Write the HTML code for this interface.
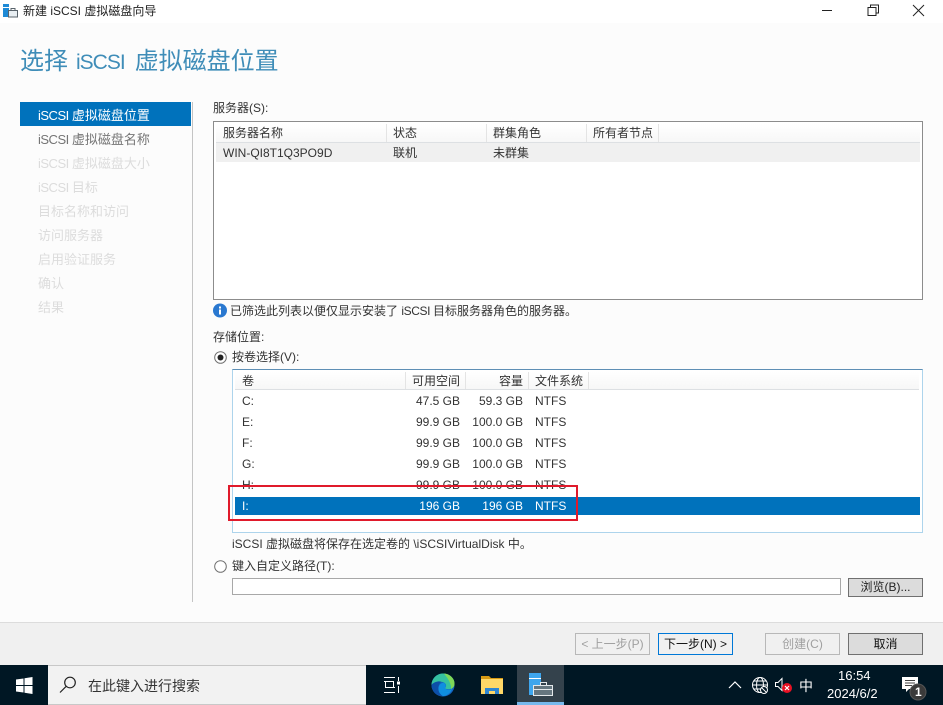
<!DOCTYPE html>
<html lang="zh-CN"><head><meta charset="utf-8"><title>新建 iSCSI 虚拟磁盘向导</title>
<style>
html,body{margin:0;padding:0;width:943px;height:705px;overflow:hidden;background:#fcfcfc}
body{position:relative;font:12px/16px "Liberation Sans","Noto Sans CJK SC",sans-serif;color:#333}
div,span.t,svg{position:absolute}
.t{position:absolute;white-space:nowrap;line-height:16px}
.r{text-align:right;width:70px}
.nav{left:38px;color:#dcdcdc;font-size:13px}
.l{letter-spacing:-.5px}
.w{color:#fff}
.btn{position:absolute;box-sizing:border-box;text-align:center;font-size:12px;line-height:20px;height:22px;width:75px;background:#dcdcdc;border:1px solid #707070;color:#222}
.dis{background:#f0f0f0;border-color:#b8b8b8;color:#a0a0a0}
.hd{background:linear-gradient(#fff,#f7f7f7);border-bottom:1px solid #dde0e3}
.v{width:1px;background:#e4e4e4}
</style></head><body>
<div style="left:0;top:0;width:943px;height:23px;background:#fff"></div>
<svg style="left:3px;top:4px" width="15" height="14" viewBox="0 0 15 14"><rect x="0" y="0" width="6" height="13" fill="#1e8ad6"/><rect x="0" y="3" width="6" height="1" fill="#fff"/><rect x="5.500" y="6.500" width="9" height="6.500" fill="#e8eef2" stroke="#59636b"/><rect x="8" y="4.500" width="4" height="2" fill="none" stroke="#59636b"/></svg>
<span class="t" style="left:23px;top:3px;color:#222">新建 iSCSI 虚拟磁盘向导</span>
<svg style="left:820px;top:4px" width="110" height="14" viewBox="0 0 110 14" fill="none" stroke="#222"><path d="M2 6.500h10"/><path d="M48 3.500h8v8h-8zM50.500 3.500v-2.500h8v8h-2.500"/><path d="M93 1l11 11M104 1l-11 11"/></svg>

<span class="t" style="left:20px;top:46px;font-size:24px;line-height:32px;color:#3f8db8">选择<span style="font-size:21px;letter-spacing:-1px;margin:0 10px 0 8px">iSCSI</span>虚拟磁盘位置</span>

<div style="left:20px;top:102px;width:171px;height:24px;background:#0072bc"></div>
<div style="left:192px;top:102px;width:1px;height:500px;background:#c4c4c4"></div>
<span class="t nav w" style="top:108px;color:#fff"><span class="l">iSCSI </span>虚拟磁盘位置</span>
<span class="t nav" style="top:132px;color:#757575"><span class="l">iSCSI </span>虚拟磁盘名称</span>
<span class="t nav" style="top:156px"><span class="l">iSCSI </span>虚拟磁盘大小</span>
<span class="t nav" style="top:180px"><span class="l">iSCSI </span>目标</span>
<span class="t nav" style="top:204px">目标名称和访问</span>
<span class="t nav" style="top:228px">访问服务器</span>
<span class="t nav" style="top:252px">启用验证服务</span>
<span class="t nav" style="top:276px">确认</span>
<span class="t nav" style="top:300px">结果</span>

<span class="t" style="left:213px;top:100px">服务器(S):</span>
<div style="left:213px;top:121px;width:708px;height:177px;border:1px solid #8c8c8c;background:#fff"></div>
<div class="hd" style="left:216px;top:124px;width:704px;height:18px"></div>
<div class="v" style="left:386px;top:124px;height:18px"></div>
<div class="v" style="left:486px;top:124px;height:18px"></div>
<div class="v" style="left:586px;top:124px;height:18px"></div>
<div class="v" style="left:658px;top:124px;height:18px"></div>
<div style="left:216px;top:143px;width:704px;height:19px;background:#f0f0f0"></div>
<span class="t" style="left:223px;top:125px">服务器名称</span><span class="t" style="left:393px;top:125px">状态</span><span class="t" style="left:493px;top:125px">群集角色</span><span class="t" style="left:593px;top:125px">所有者节点</span>
<span class="t" style="left:223px;top:145px">WIN-QI8T1Q3PO9D</span><span class="t" style="left:393px;top:145px">联机</span><span class="t" style="left:493px;top:145px">未群集</span>

<svg style="left:213px;top:303px" width="15" height="15" viewBox="0 0 15 15"><circle cx="7" cy="7.500" r="7" fill="#2a78d0"/><rect x="6" y="6.500" width="2" height="5" fill="#fff"/><rect x="6" y="3.500" width="2" height="2" fill="#fff"/></svg>
<span class="t" style="left:230px;top:303px">已筛选此列表以便仅显示安装了 <span style="letter-spacing:-.4px">iSCSI </span>目标服务器角色的服务器。</span>
<span class="t" style="left:213px;top:329px">存储位置:</span>

<svg style="left:214px;top:351px" width="13" height="13"><circle cx="6.500" cy="6.500" r="5.800" fill="#fff" stroke="#707070"/><circle cx="6.500" cy="6.500" r="3" fill="#222"/></svg>
<span class="t" style="left:232px;top:349px">按卷选择(V):</span>

<div style="left:232px;top:369px;width:689px;height:162px;border:1px solid #add4ec;border-top-color:#5e8fb5;background:#fff"></div>
<div class="hd" style="left:235px;top:372px;width:684px;height:17px"></div>
<div class="v" style="left:405px;top:372px;height:17px"></div>
<div class="v" style="left:465px;top:372px;height:17px"></div>
<div class="v" style="left:528px;top:372px;height:17px"></div>
<div class="v" style="left:588px;top:372px;height:17px"></div>
<span class="t" style="left:242px;top:373px">卷</span><span class="t" style="left:412px;top:373px">可用空间</span><span class="t" style="left:499px;top:373px">容量</span><span class="t" style="left:535px;top:373px">文件系统</span>

<span class="t" style="left:242px;top:393px">C:</span><span class="t r" style="left:390px;top:393px">47.5 GB</span><span class="t r" style="left:453px;top:393px">59.3 GB</span><span class="t" style="left:535px;top:393px">NTFS</span>
<span class="t" style="left:242px;top:414px">E:</span><span class="t r" style="left:390px;top:414px">99.9 GB</span><span class="t r" style="left:453px;top:414px">100.0 GB</span><span class="t" style="left:535px;top:414px">NTFS</span>
<span class="t" style="left:242px;top:435px">F:</span><span class="t r" style="left:390px;top:435px">99.9 GB</span><span class="t r" style="left:453px;top:435px">100.0 GB</span><span class="t" style="left:535px;top:435px">NTFS</span>
<span class="t" style="left:242px;top:456px">G:</span><span class="t r" style="left:390px;top:456px">99.9 GB</span><span class="t r" style="left:453px;top:456px">100.0 GB</span><span class="t" style="left:535px;top:456px">NTFS</span>
<span class="t" style="left:242px;top:477px">H:</span><span class="t r" style="left:390px;top:477px">99.9 GB</span><span class="t r" style="left:453px;top:477px">100.0 GB</span><span class="t" style="left:535px;top:477px">NTFS</span>
<div style="left:235px;top:497px;width:685px;height:18px;background:#0072bc"></div>
<span class="t w" style="left:242px;top:498px">I:</span><span class="t r w" style="left:390px;top:498px">196 GB</span><span class="t r w" style="left:453px;top:498px">196 GB</span><span class="t w" style="left:535px;top:498px">NTFS</span>
<div style="left:228px;top:485px;width:346px;height:32px;border:2px solid #e01a2b"></div>

<span class="t" style="left:232px;top:536px">iSCSI 虚拟磁盘将保存在选定卷的 \iSCSIVirtualDisk 中。</span>
<svg style="left:214px;top:560px" width="13" height="13"><circle cx="6.500" cy="6.500" r="5.800" fill="#fff" stroke="#707070"/></svg>
<span class="t" style="left:232px;top:558px">键入自定义路径(T):</span>
<div style="left:232px;top:578px;width:607px;height:15px;border:1px solid #a8a8a8;background:#fff"></div>
<span class="btn" style="left:848px;top:578px;height:19px;line-height:17px">浏览(B)...</span>

<div style="left:0;top:622px;width:943px;height:43px;background:#f0f0f0;border-top:1px solid #dcdcdc;box-sizing:border-box"></div>
<span class="btn dis" style="left:575px;top:633px">&lt; 上一步(P)</span>
<span class="btn" style="left:658px;top:633px;background:#f0f0f0;border-color:#0078d7;color:#111">下一步(N) &gt;</span>
<span class="btn dis" style="left:765px;top:633px">创建(C)</span>
<span class="btn" style="left:848px;top:633px;color:#111">取消</span>

<div style="left:0;top:665px;width:943px;height:40px;background:#001724"></div>
<svg style="left:16px;top:677px" width="17" height="17" viewBox="0 0 17 17" fill="#fff"><path d="M0 2.500l7.500-1v6.500H0zM8.500 1.300l8-1.300v8h-8zM0 9h7.500v6.500l-7.500-1zM8.500 9h8v8l-8-1.300z"/></svg>
<div style="left:48px;top:665px;width:318px;height:40px;background:#f2f2f2;border-top:1px solid #c8c8c8;border-bottom:1px solid #c8c8c8;box-sizing:border-box"></div>
<svg style="left:59px;top:676px" width="18" height="18" viewBox="0 0 18 18" fill="none" stroke="#222" stroke-width="1.200"><circle cx="11" cy="6.500" r="5.300"/><path d="M7.200 10.300L1 16.500"/></svg>
<span class="t" style="left:88px;top:678px;font-size:14px;color:#333">在此键入进行搜索</span>

<svg style="left:384px;top:676px" width="17" height="18" viewBox="0 0 17 18" fill="none" stroke="#fff"><path d="M0 1.500h11M0 16.500h11M1.500 5.500h8v6h-8zM0 5.500h3M8 11.500h3M14.500 1v4M14.500 10v7"/><rect x="13" y="5.500" width="3" height="3" fill="#fff" stroke="none"/></svg>
<svg style="left:431px;top:673px" width="24" height="24" viewBox="0 0 26 26"><circle cx="13" cy="13" r="12.500" fill="#1565c0"/><path d="M.5 13C1 5 7 .5 13 .5c7 0 12.500 5 12.500 11 0 4-3.500 6-6.500 6-2.500 0-4-1-4-1 2-1.500 2-5-1.500-6.500C9 8.500 3 9.500.5 13z" fill="#35c1a0"/><path d="M14 .6c6 .3 11.500 5 11.500 11 0 3-2 5-4 5.700 1-3-1-9-7.500-16.700z" fill="#7fd858"/><path d="M8 17c0-4 3-6.500 6-6.500 2.500 1.500 2.500 4.500 1 6 2 2 6 2 8 .5-2 5-6 8-11 8-2 0-4-3-4-8z" fill="#0f8fe0"/><path d="M8 17c0 3 2 6.500 5 8C6 25 1 20 .5 13 3 9.500 9 8.500 11 9.500 9 11 8 14 8 17z" fill="#0d4fa8"/></svg>
<svg style="left:481px;top:676px" width="22" height="18" viewBox="0 0 22 18"><path d="M0 0h8l2 2h12v4H0z" fill="#d79b14"/><rect x="0" y="3" width="22" height="15" fill="#ffd867"/><path d="M4 18v-6h14v6h-4v-3H8v3z" fill="#2f86d1"/></svg>
<div style="left:517px;top:665px;width:47px;height:40px;background:#34424c"></div>
<div style="left:517px;top:702px;width:47px;height:3px;background:#76b9ed"></div>
<svg style="left:529px;top:673px" width="25" height="24" viewBox="0 0 25 24"><rect x="0" y="0" width="12" height="22" fill="#3ea6ee"/><rect x="0" y="5" width="12" height="1" fill="#fff"/><rect x="4.500" y="12.500" width="19" height="10" fill="#66767f" stroke="#e4e8ea"/><rect x="11.500" y="9.500" width="6" height="3" fill="none" stroke="#e4e8ea"/><path d="M5 16.500h18" stroke="#e4e8ea"/></svg>

<svg style="left:728px;top:680px" width="14" height="9" viewBox="0 0 14 9" fill="none" stroke="#fff" stroke-width="1.200"><path d="M1 8l6-6 6 6"/></svg>
<svg style="left:751px;top:676px" width="22" height="20" viewBox="0 0 22 20" fill="none" stroke="#fff"><circle cx="9" cy="9" r="7.500"/><ellipse cx="9" cy="9" rx="3.500" ry="7.500"/><path d="M1.500 9h15M2.500 5h13M2.500 13h13"/><circle cx="13" cy="14" r="3.500" fill="#001724"/><path d="M10.800 11.800l4.400 4.400"/></svg>
<svg style="left:775px;top:677px" width="18" height="17" viewBox="0 0 18 17"><path d="M.5 5.500h2.500L7 1.500v12L3 9.500H.5z" fill="none" stroke="#fff"/><circle cx="12" cy="11" r="5" fill="#e81123"/><path d="M10 9l4 4M14 9l-4 4" stroke="#fff" stroke-width="1.200"/></svg>
<span class="t" style="left:799px;top:678px;font-size:14px;color:#fff">中</span>
<span class="t" style="left:838px;top:668px;font-size:13px;color:#fff">16:54</span>
<span class="t" style="left:827px;top:686px;font-size:13px;color:#fff">2024/6/2</span>
<svg style="left:901px;top:676px" width="27" height="26" viewBox="0 0 27 26"><path d="M1 1h16v12H8l-3 3v-3H1z" fill="#fff"/><path d="M4 4.500h10M4 7h10M4 9.500h7" stroke="#444"/><circle cx="17" cy="16" r="8" fill="#3a3a3a" stroke="#555"/></svg>
<span class="t" style="left:915px;top:684px;font-size:12px;color:#fff;font-weight:bold">1</span>
</body></html>
